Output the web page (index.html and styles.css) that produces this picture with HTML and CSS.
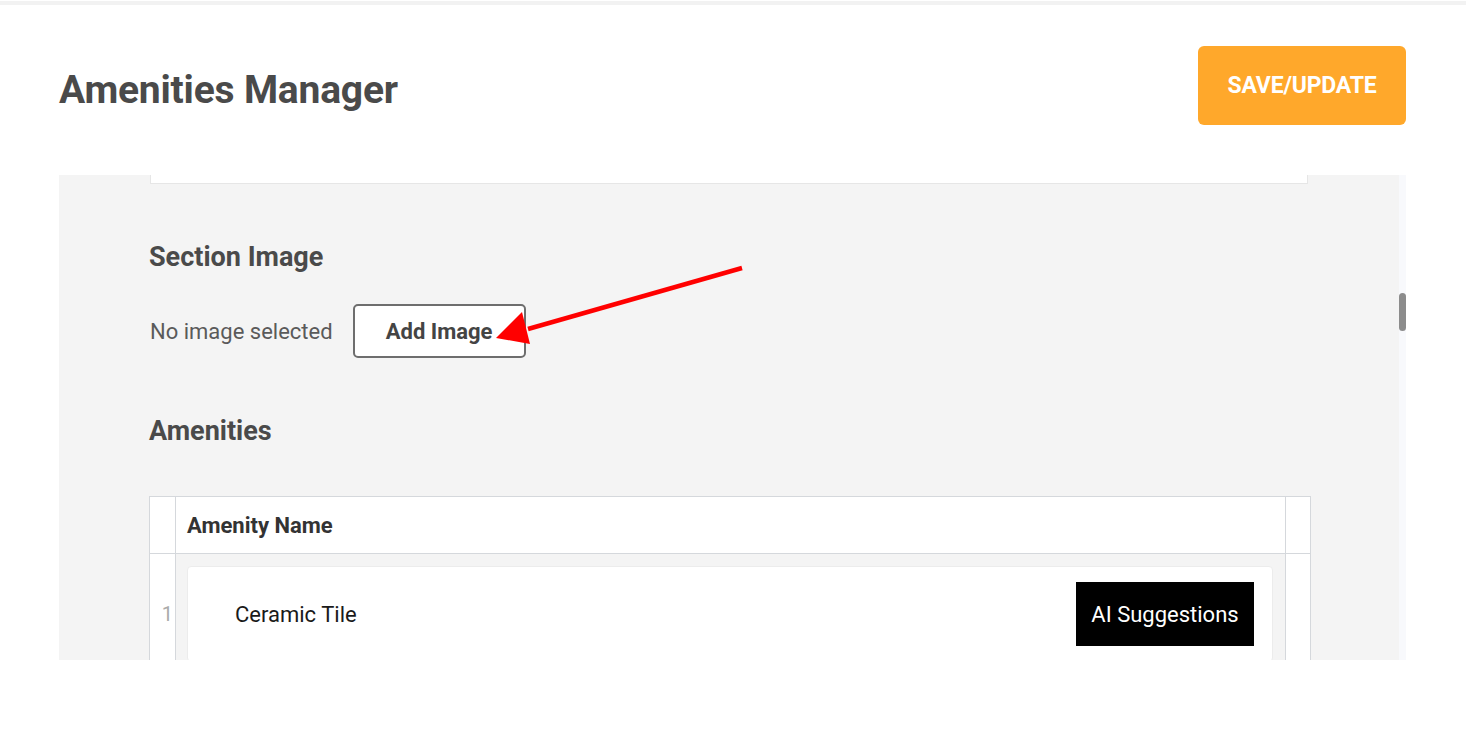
FILE: index.html
```html
<html>
  <head>
    <title>Amenities Manager</title>
    <link rel="stylesheet" href="styles.css">
  </head>
  <body>
    <div class="top-bar"></div>

    <header class="page-header">
      <h1 class="page-title">Amenities Manager</h1>
      <button class="save-button">SAVE/UPDATE</button>
    </header>

    <section class="editor-panel">
      <div class="editor-content">
        <div class="previous-block"></div>

        <h2 class="section-title section-title-image">Section Image</h2>
        <div class="image-row">
          <span class="image-status">No image selected</span>
          <button class="add-image-button">Add Image</button>
        </div>

        <h2 class="section-title section-title-amenities">Amenities</h2>

        <table class="amenity-table">
          <thead>
            <tr>
              <th class="col-index"></th>
              <th class="col-name">Amenity Name</th>
              <th class="col-action"></th>
            </tr>
          </thead>
          <tbody>
            <tr>
              <td class="col-index">1</td>
              <td class="col-name cell-card">
                <div class="amenity-card">
                  <span class="amenity-label">Ceramic Tile</span>
                  <button class="ai-button">AI Suggestions</button>
                </div>
              </td>
              <td class="col-action"></td>
            </tr>
          </tbody>
        </table>
      </div>

      <div class="scroll-track">
        <div class="scroll-thumb"></div>
      </div>

      <!-- annotation arrow pointing at the button -->
      <svg class="annotation-arrow" width="260" height="90" viewBox="0 0 260 90">
        <line x1="254" y1="5" x2="40" y2="66" stroke="#ff0000" stroke-width="4.5" stroke-linecap="butt" />
        <polygon points="8,75 34,49 42,81" fill="#ff0000" />
      </svg>
    </section>
  </body>
</html>
```

FILE: styles.css
```css
body {
  margin: 0;
  background-color: #ffffff;
  font-family: Roboto, "Open Sans", sans-serif;
  color: #4a4a4a;
}

.top-bar {
  height: 4px;
  margin-top: 1px;
  background-color: #f2f2f2;
}

.page-header {
  display: flex;
  flex-direction: row;
  align-items: flex-start;
  justify-content: space-between;
  height: 170px;
  padding-left: 59px;
  padding-right: 60px;
}

.page-title {
  margin: 0;
  margin-top: 61px;
  font-size: 39px;
  font-weight: 700;
  line-height: 48px;
  letter-spacing: -0.2px;
  color: #4a4a4a;
}

.save-button {
  margin-top: 41px;
  width: 208px;
  height: 79px;
  border: none;
  border-radius: 6px;
  background-color: #ffa82b;
  color: #ffffff;
  font-family: inherit;
  font-size: 23px;
  font-weight: 700;
  letter-spacing: -0.2px;
  cursor: pointer;
}

.editor-panel {
  position: relative;
  display: flex;
  flex-direction: row;
  height: 485px;
  margin-left: 59px;
  margin-right: 60px;
  background-color: #f4f4f4;
  overflow: hidden;
}

.editor-content {
  flex: auto;
  padding-left: 90px;
  padding-right: 90px;
}

.previous-block {
  height: 8px;
  margin: 0 1px;
  background-color: #ffffff;
  border: 1px solid #e6e6e6;
  border-top: none;
}

.section-title {
  margin: 0;
  font-size: 27px;
  font-weight: 700;
  line-height: 34px;
  color: #4a4a4a;
}

.section-title-image {
  margin-top: 56px;
}

.section-title-amenities {
  margin-top: 56px;
}

.image-row {
  display: flex;
  flex-direction: row;
  align-items: center;
  margin-top: 30px;
}

.image-status {
  font-size: 22px;
  color: #5a5a5a;
  margin-left: 1px;
}

.add-image-button {
  margin-left: 20px;
  width: 173px;
  height: 54px;
  background-color: #ffffff;
  border: 2px solid #6e6e6e;
  border-radius: 5px;
  font-family: inherit;
  font-size: 22px;
  font-weight: 700;
  color: #444444;
  cursor: pointer;
}

.amenity-table {
  width: calc(100% + 2px);
  margin-top: 48px;
  margin-left: 0;
  border-collapse: collapse;
  background-color: #ffffff;

  th, td {
    border: 1px solid #d5d8dc;
    padding: 0;
  }

  th {
    height: 57px;
    text-align: left;
    font-size: 22px;
    font-weight: 700;
    color: #333333;
  }

  .col-index {
    width: 23px;
    text-align: right;
    padding-right: 2px;
    font-size: 20px;
    color: #aaaaaa;
  }

  .col-name {
    padding-left: 11px;
  }

  .col-action {
    width: 24px;
  }

  .cell-card {
    background-color: #f4f4f4;
    padding: 12px 12px 12px 11px;
  }
}

.amenity-card {
  display: flex;
  flex-direction: row;
  align-items: center;
  justify-content: space-between;
  padding: 15px 18px 15px 47px;
  background-color: #ffffff;
  border: 1px solid #ececec;
  border-radius: 4px;
}

.amenity-label {
  font-size: 22px;
  color: #1a1a1a;
}

.ai-button {
  width: 178px;
  height: 64px;
  border: none;
  background-color: #000000;
  color: #ffffff;
  font-family: inherit;
  font-size: 22px;
  cursor: pointer;
}

.scroll-track {
  width: 7px;
  flex: none;
  background-color: #f8f9fc;
}

.scroll-thumb {
  margin-top: 118px;
  height: 38px;
  border-radius: 4px;
  background-color: #8c8c8c;
}

.annotation-arrow {
  position: absolute;
  left: 429px;
  top: 88px;
}
```
